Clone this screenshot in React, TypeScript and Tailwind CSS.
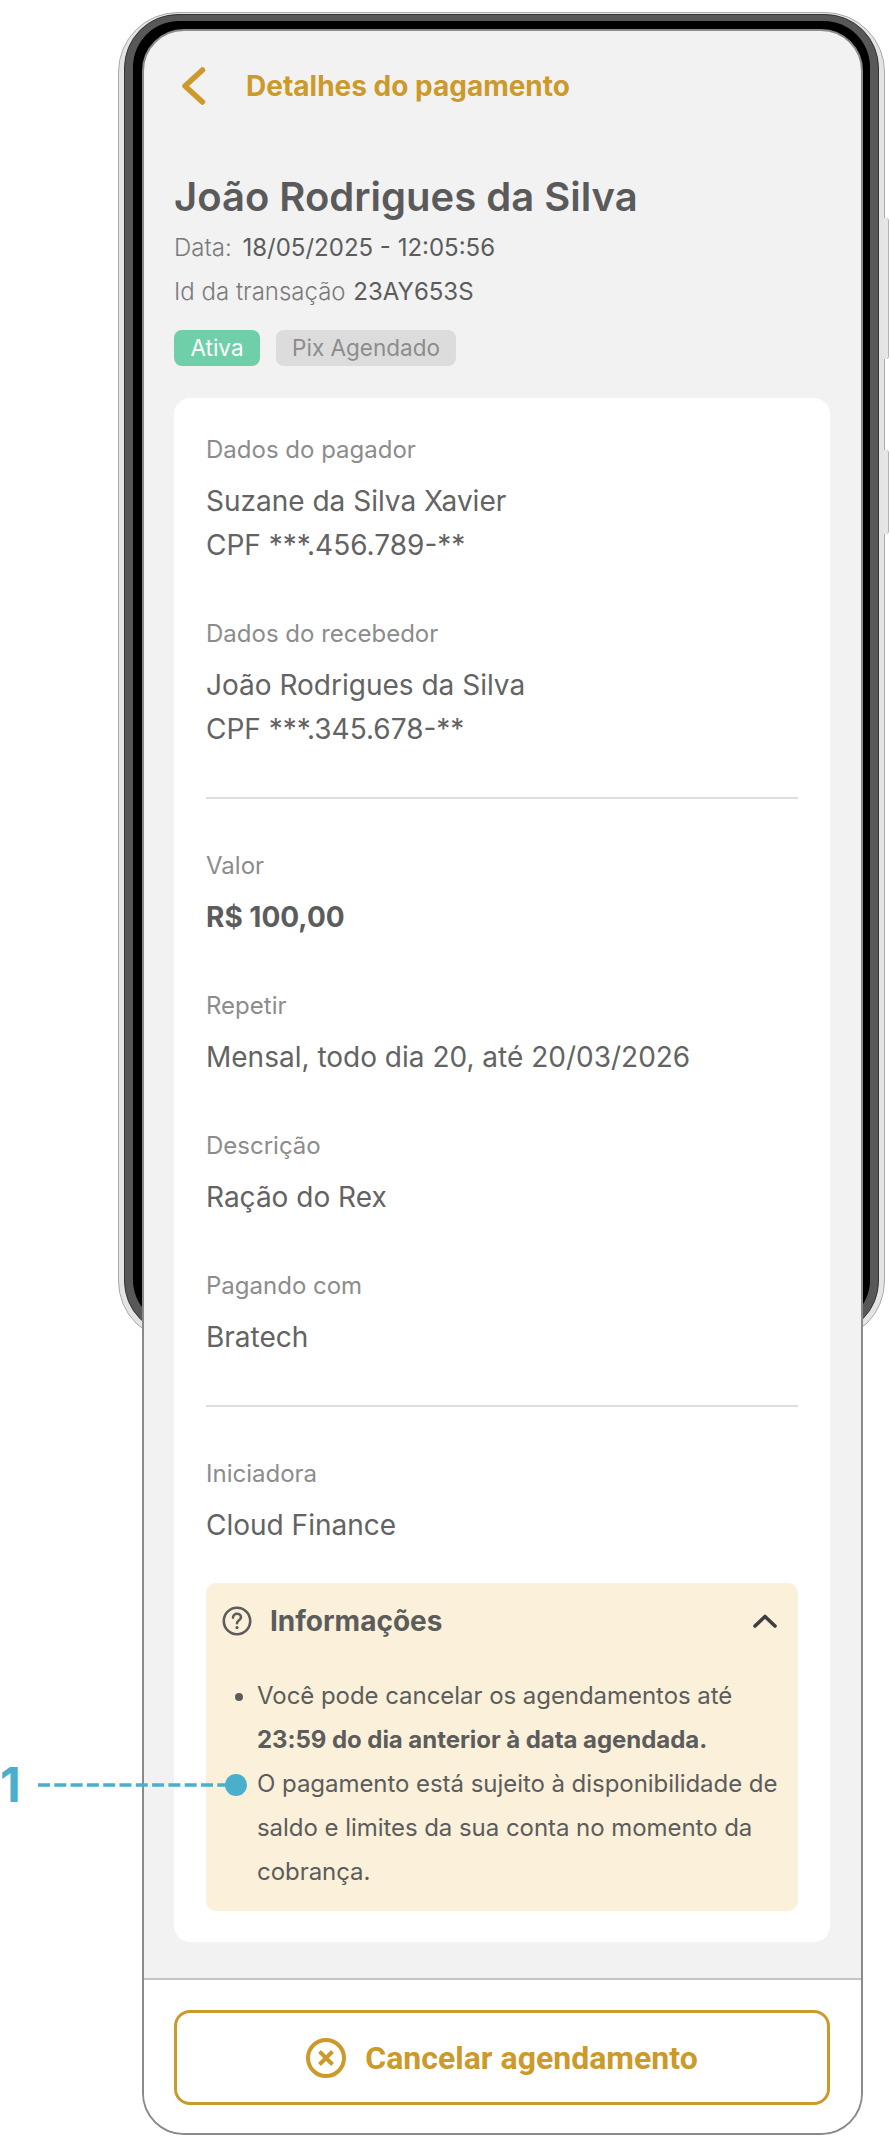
import React from "react";

const font = { fontFamily: "Inter, sans-serif" };

function Label({ children }: { children: React.ReactNode }) {
  return <div className="h-[30px] text-[24px] leading-[30px] font-normal text-[#8c8c8c]">{children}</div>;
}

function Field({ label, children, bold, className = "" }: { label: string; children: React.ReactNode; bold?: boolean; className?: string }) {
  return (
    <div className={className}>
      <Label>{label}</Label>
      <div className={`mt-[14px] text-[28px] leading-[44px] ${bold ? "font-bold text-[#5c5c5c]" : "font-normal text-[#636363]"}`}>{children}</div>
    </div>
  );
}

function PhoneFrame() {
  return (
    <div className="absolute left-[118px] top-[12px] w-[767px] h-[1329px]">
      <div className="absolute right-[-4px] top-[206px] w-[5px] h-[141px] rounded-r-[3px] border-r border-[#b5b5b5] bg-[#e6e6e6]" />
      <div className="absolute right-[-4px] top-[438px] w-[5px] h-[84px] rounded-r-[3px] border-r border-[#b5b5b5] bg-[#e6e6e6]" />
      <div className="h-full rounded-[60px] border border-[#aaaaaa] bg-[#e4e4e4] pt-[1px] px-[5px] pb-[5px]">
        <div className="h-full rounded-[54px] border border-[#333333] bg-[#585858] pt-[6px] px-[8px] pb-[8px]">
          <div className="h-full rounded-[46px] bg-black" />
        </div>
      </div>
    </div>
  );
}

export default function App() {
  return (
    <div className="relative w-[890px] h-[2136px] bg-white overflow-hidden" style={font}>
      <PhoneFrame />

      <div className="relative ml-[142px] pt-[29px] w-[721px]">
        <div className="h-[2106px] rounded-[42px] border-2 border-[#8a8a8a] bg-[#f2f2f2] overflow-hidden flex flex-col">
          <div className="pt-[31px] pl-[30px]">
            <div className="h-[48px] flex items-center">
              <svg width="30" height="40" viewBox="0 0 30 40" fill="none" className="ml-[4px]">
                <path d="M24.5 4 L7 20 L24.5 36" stroke="#cc9a2b" strokeWidth="5.5" strokeLinecap="round" strokeLinejoin="round" />
              </svg>
              <span className="ml-[38px] text-[28px] font-bold text-[#cc9a2b] leading-[48px]">Detalhes do pagamento</span>
            </div>

            <h1 className="mt-[65px] text-[40px] leading-[44px] font-semibold text-[#5a5a5a]">João Rodrigues da Silva</h1>
            <div className="mt-[7px] text-[24px] leading-[44px] font-normal text-[#5c5c5c]">
              <span className="mr-[4px] font-light text-[#7a7a7a]">Data:</span> 18/05/2025 - 12:05:56
            </div>
            <div className="text-[24px] leading-[44px] font-normal text-[#5c5c5c]">
              <span className="mr-[1px] font-light text-[#7a7a7a]">Id da transação</span> 23AY653S
            </div>
            <div className="mt-[16px] flex gap-[16px]">
              <span className="h-[36px] w-[86px] rounded-[8px] bg-[#6fcfa8] text-white text-[22.5px] font-normal leading-[36px] text-center">Ativa</span>
              <span className="h-[36px] w-[180px] rounded-[8px] bg-[#dcdcdc] text-[#8c8c8c] text-[22.5px] leading-[36px] text-center">Pix Agendado</span>
            </div>
          </div>

          <div className="ml-[30px] mt-[32px] w-[656px] h-[1544px] rounded-[16px] bg-white px-[32px] pt-[37px]">
            <Field label="Dados do pagador">
              Suzane da Silva Xavier
              <br />
              CPF ***.456.789-**
            </Field>
            <Field label="Dados do recebedor" className="mt-[52px]">
              João Rodrigues da Silva
              <br />
              CPF ***.345.678-**
            </Field>
            <div className="mt-[46px] h-[2px] bg-[#dedede]" />
            <Field label="Valor" bold className="mt-[52px]">R$ 100,00</Field>
            <Field label="Repetir" className="mt-[52px]">Mensal, todo dia 20, até 20/03/2026</Field>
            <Field label="Descrição" className="mt-[52px]">Ração do Rex</Field>
            <Field label="Pagando com" className="mt-[52px]">Bratech</Field>
            <div className="mt-[46px] h-[2px] bg-[#dedede]" />
            <Field label="Iniciadora" className="mt-[52px]">Cloud Finance</Field>

            <div className="mt-[36px] h-[328px] rounded-[10px] bg-[#fbf0da] pl-[16px] pr-[16px] pt-[19px]">
              <div className="h-[38px] flex items-center justify-between">
                <div className="flex items-center">
                  <svg width="30" height="30" viewBox="0 0 30 30" fill="none">
                    <circle cx="15" cy="15" r="13.2" stroke="#5c5c5c" strokeWidth="2.6" />
                    <path d="M11 11.6c0-2.3 1.8-3.8 4-3.8s4 1.5 4 3.5c0 3-4 3-4 6" stroke="#5c5c5c" strokeWidth="2.6" strokeLinecap="round" />
                    <circle cx="15" cy="21.6" r="1.6" fill="#5c5c5c" />
                  </svg>
                  <span className="ml-[18px] text-[28px] font-bold text-[#5c5c5c] leading-[38px]">Informações</span>
                </div>
                <svg width="26" height="16" viewBox="0 0 26 16" fill="none" className="mr-[4px]">
                  <path d="M3 13 L13 3.5 L23 13" stroke="#3f3f3f" strokeWidth="3.6" strokeLinecap="round" strokeLinejoin="round" />
                </svg>
              </div>
              <ul className="mt-[34px] list-disc pl-[35px] text-[24px] leading-[44px] text-[#5c5c5c] tracking-[-0.05px]">
                <li>
                  Você pode cancelar os agendamentos até <strong className="font-bold">23:59 do dia anterior à data agendada.</strong>
                </li>
                <li>O pagamento está sujeito à disponibilidade de saldo e limites da sua conta no momento da cobrança.</li>
              </ul>
            </div>
          </div>

          <div className="mt-[36px] flex-1 border-t-2 border-[#c4c4c4] bg-white pt-[30px] pl-[30px]">
            <button className="w-[656px] h-[95px] rounded-[16px] border-[3px] border-[#cc9a2b] flex items-center justify-center gap-[19px]">
              <svg width="40" height="40" viewBox="0 0 40 40" fill="none">
                <circle cx="20" cy="20" r="18" stroke="#cc9a2b" strokeWidth="4" />
                <path d="M13.5 13.5 L26.5 26.5 M26.5 13.5 L13.5 26.5" stroke="#cc9a2b" strokeWidth="4" />
              </svg>
              <span className="text-[32px] font-bold text-[#cc9a2b]" style={{ fontFamily: "Roboto, sans-serif" }}>Cancelar agendamento</span>
            </button>
          </div>
        </div>
      </div>

      <div className="absolute left-[0px] top-[1757px] text-[48px] leading-[56px] font-bold text-[#4aafcd]">1</div>
      <svg className="absolute left-[36px] top-[1772px]" width="216" height="26" viewBox="0 0 216 26" fill="none">
        <line x1="2" y1="13" x2="190" y2="13" stroke="#4aafcd" strokeWidth="3.5" strokeDasharray="12 4.3" />
        <circle cx="200" cy="13" r="11" fill="#4aafcd" />
      </svg>
    </div>
  );
}
